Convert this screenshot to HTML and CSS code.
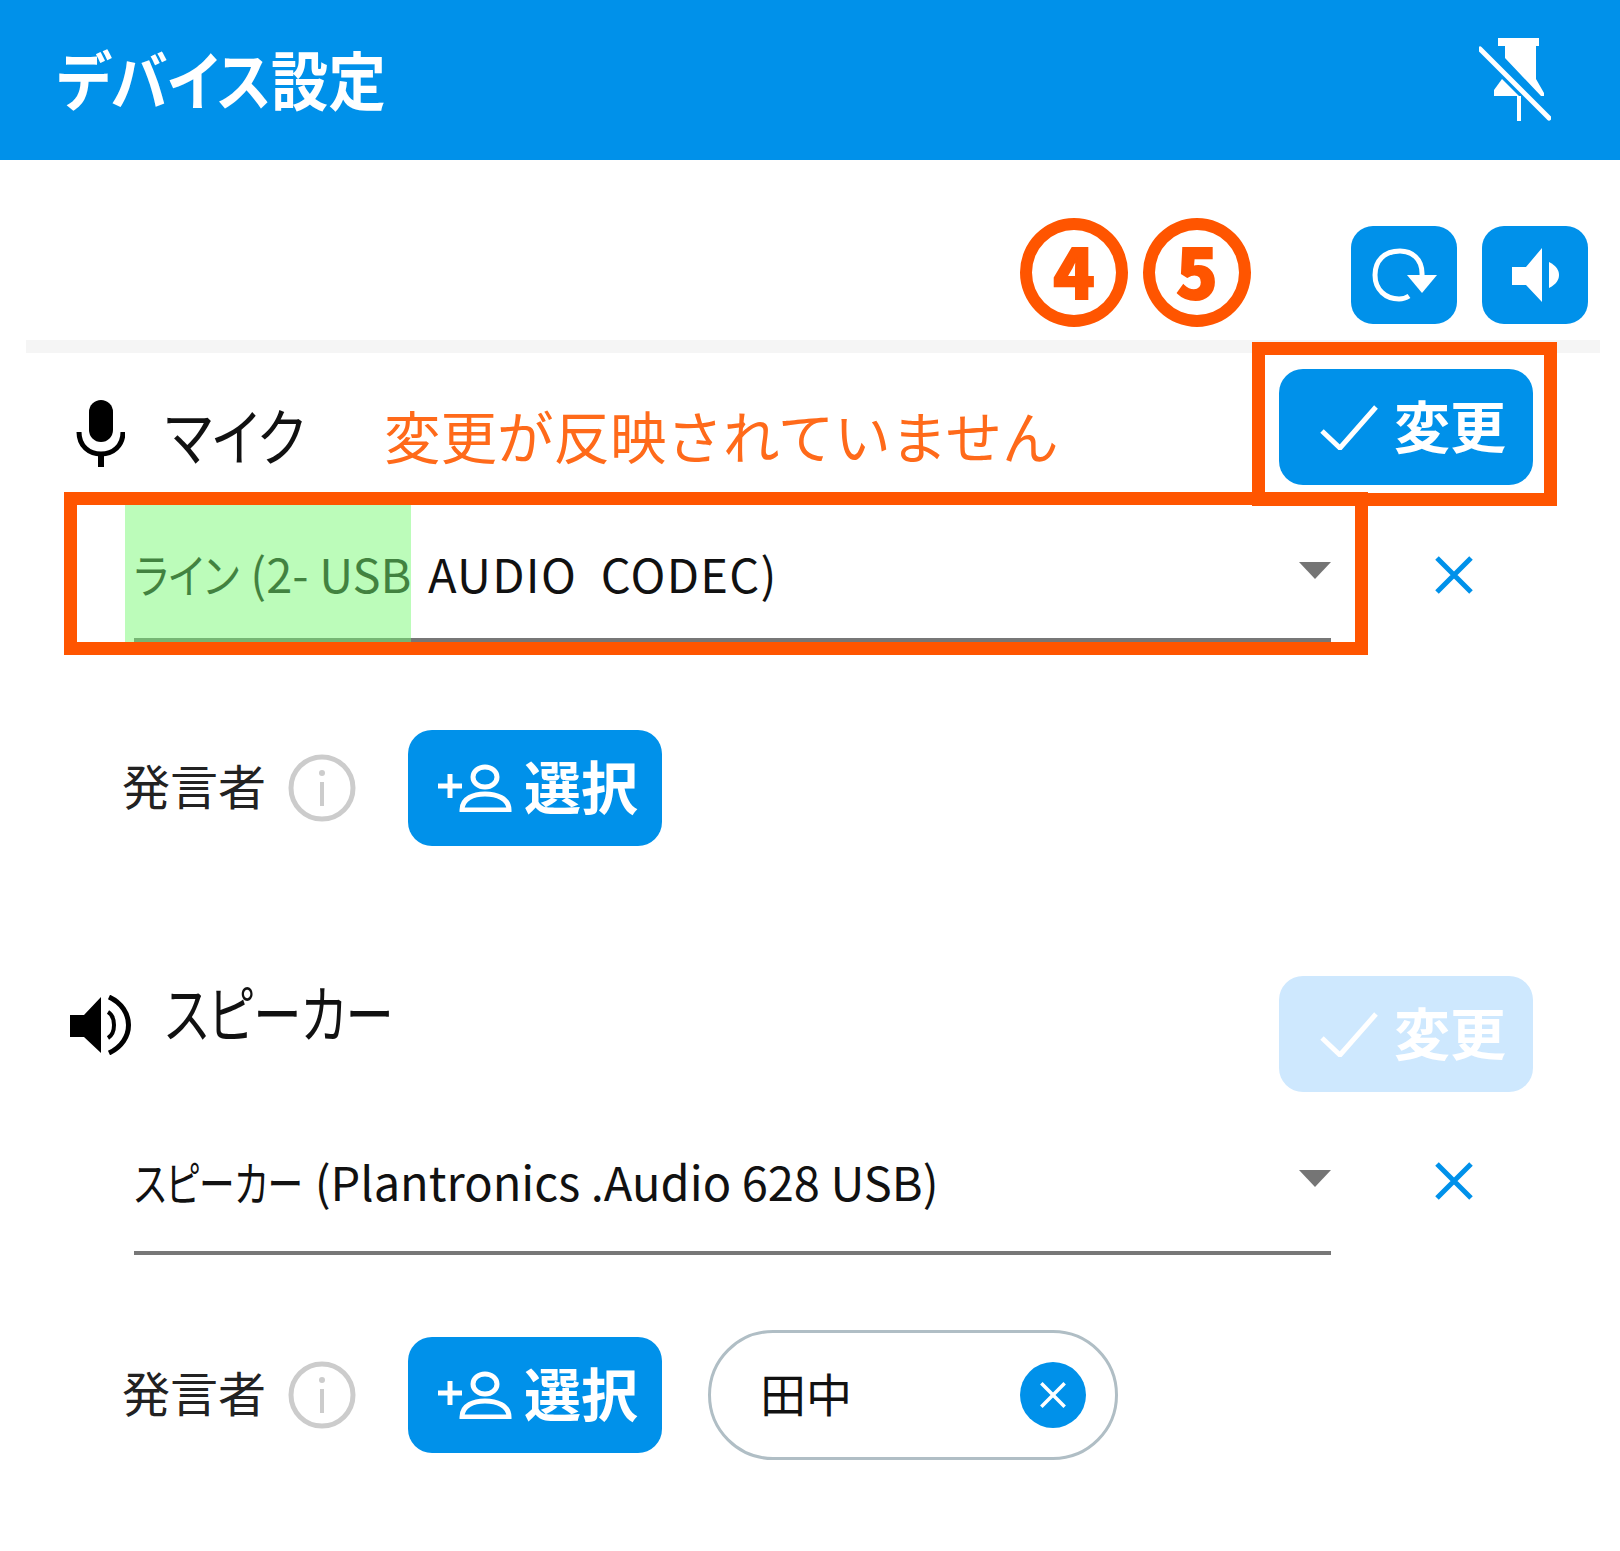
FILE: index.html
```html
<!DOCTYPE html>
<html lang="ja">
<head>
    <meta charset="UTF-8">
    <title>デバイス設定</title>
    <link rel="stylesheet" href="styles.css">
</head>
<body>
<div class="panel">

    <header class="title-bar">
        <h1>デバイス設定</h1>
        <svg class="pin-icon" viewBox="0 0 72 83" fill="#fff">
            <rect x="19" y="0" width="41" height="8"/>
            <path d="M26 8H57V41L65 55V58H62L26 20Z"/>
            <path d="M23 41L15 52V58H40Z"/>
            <rect x="38" y="58" width="4" height="25"/>
            <path d="M1 11L70 80" stroke="#fff" stroke-width="5" stroke-linecap="round"/>
        </svg>
    </header>

    <div class="toolbar">
        <button class="icon-button">
            <svg width="65" height="54" viewBox="0 0 65 54" fill="none" stroke="#fff" stroke-width="5">
                <path d="M50 28C51 10 39 3 28 3C12 3 3 13 3 27C3 42 14 51 27 51C31 51 34 50 37 48"/>
                <path d="M35 27H65L50 45Z" fill="#fff" stroke="none"/>
            </svg>
        </button>
        <button class="icon-button">
            <svg width="47" height="54" viewBox="0 0 47 54" fill="#fff">
                <path d="M0 19H14L30 0V54L14 37H0Z"/>
                <path d="M37 14C45 18 47 23 47 27C47 31 45 36 37 40Z"/>
            </svg>
        </button>
    </div>
    <div class="divider"></div>

    <!-- マイク -->
    <section>
        <div class="device-head device-head--mic">
            <svg class="mic-icon" viewBox="0 0 49 67">
                <rect x="13" y="0" width="24" height="42" rx="12"/>
                <path d="M3 32C3 46 13 54 25 54S47 46 47 32" fill="none" stroke="#000" stroke-width="5"/>
                <rect x="22" y="54" width="6" height="13"/>
            </svg>
            <span class="device-title"><span class="device-title-text">マイク</span></span>
            <span class="warning">変更が反映されていません</span>
            <button class="apply-button">
                <svg class="check-icon" viewBox="0 0 58 45"><path d="M2 26L20 43L56 2"/></svg>
                <span class="button-text">変更</span>
            </button>
        </div>
        <div class="select-row">
            <div class="select-field select-field--mic">
                <span class="select-text"><span class="kana kana--line">ライン</span> (2- USB <span class="codec">AUDIO&nbsp; CODEC)</span></span>
                <i class="select-arrow"></i>
            </div>
            <svg class="clear-icon" viewBox="0 0 38 38"><path d="M2 2L36 36M36 2L2 36"/></svg>
        </div>
        <div class="speaker-row speaker-row--mic">
            <span class="speaker-label">発言者</span>
            <svg class="info-icon" viewBox="0 0 68 68">
                <circle cx="34" cy="34" r="31" fill="none" stroke="#ccc" stroke-width="5"/>
                <circle cx="34" cy="19" r="3" fill="#ccc"/>
                <rect x="32" y="28" width="4" height="24" fill="#ccc"/>
            </svg>
            <button class="select-button">
                <svg class="person-icon" viewBox="0 0 76 48" fill="none" stroke="#fff" stroke-width="5">
                    <path d="M0 22H24M12 10V34"/>
                    <ellipse cx="47" cy="13" rx="12" ry="10"/>
                    <path d="M24 46C24 34 36 30 47 30S71 34 71 46Z"/>
                </svg>
                <span class="button-text">選択</span>
            </button>
        </div>
    </section>

    <!-- スピーカー -->
    <section>
        <div class="device-head device-head--speaker">
            <svg class="speaker-icon" viewBox="0 0 62 60">
                <path d="M0 20H14L31 2V58L14 42H0Z"/>
                <path d="M38 17C46 22 46 38 38 43" fill="none" stroke="#000" stroke-width="4"/>
                <path d="M39 2C65 14 65 46 39 58" fill="none" stroke="#000" stroke-width="5"/>
            </svg>
            <span class="device-title"><span class="device-title-text">スピーカー</span></span>
            <button class="apply-button apply-button--disabled">
                <svg class="check-icon" viewBox="0 0 58 45"><path d="M2 26L20 43L56 2"/></svg>
                <span class="button-text">変更</span>
            </button>
        </div>
        <div class="select-row select-row--speaker">
            <div class="select-field">
                <span class="select-text"><span class="kana kana--speaker">スピーカー</span> (Plantronics .Audio 628 USB)</span>
                <i class="select-arrow"></i>
            </div>
            <svg class="clear-icon" viewBox="0 0 38 38"><path d="M2 2L36 36M36 2L2 36"/></svg>
        </div>
        <div class="speaker-row speaker-row--speaker">
            <span class="speaker-label">発言者</span>
            <svg class="info-icon" viewBox="0 0 68 68">
                <circle cx="34" cy="34" r="31" fill="none" stroke="#ccc" stroke-width="5"/>
                <circle cx="34" cy="19" r="3" fill="#ccc"/>
                <rect x="32" y="28" width="4" height="24" fill="#ccc"/>
            </svg>
            <button class="select-button">
                <svg class="person-icon" viewBox="0 0 76 48" fill="none" stroke="#fff" stroke-width="5">
                    <path d="M0 22H24M12 10V34"/>
                    <ellipse cx="47" cy="13" rx="12" ry="10"/>
                    <path d="M24 46C24 34 36 30 47 30S71 34 71 46Z"/>
                </svg>
                <span class="button-text">選択</span>
            </button>
            <div class="chip">
                <span class="chip-text">田中</span>
                <span class="chip-close">
                    <svg viewBox="0 0 24 24"><path d="M2 2L22 22M22 2L2 22"/></svg>
                </span>
            </div>
        </div>
    </section>

    <!-- 注釈 -->
    <div class="note-number note-number--four">4</div>
    <div class="note-number note-number--five">5</div>
    <div class="note-box note-box--apply"></div>
    <div class="note-box note-box--select"></div>
    <div class="highlight"></div>
</div>
</body>
</html>
```

FILE: styles.css
```css
* {
    box-sizing: border-box;
}
body {
    margin: 0;
    background-color: #fff;
    color: #111;
    font-family: "Noto Sans CJK JP", sans-serif;
    font-feature-settings: "palt";
}
button {
    border: none;
    padding: 0;
    font-family: inherit;
    font-feature-settings: inherit;
}
.panel {
    position: relative;
    width: 1620px;
    height: 1551px;
    overflow: hidden;
}

/* タイトルバー */
.title-bar {
    display: flex;
    justify-content: space-between;
    align-items: center;
    height: 160px;
    padding: 0 69px 0 57px;
    background-color: #0091ea;
}
.title-bar h1 {
    margin: -6px 0 0;
    color: #fff;
    font-size: 64px;
    font-weight: 700;
    transform: scaleX(0.895);
    transform-origin: left center;
}
.pin-icon {
    width: 72px;
    height: 83px;
    margin-top: -2px;
}

/* ツールバー */
.toolbar {
    display: flex;
    justify-content: flex-end;
    gap: 25px;
    height: 180px;
    padding: 66px 32px 0 0;
}
.icon-button {
    display: flex;
    justify-content: center;
    align-items: center;
    width: 106px;
    height: 98px;
    background-color: #0091ea;
    border-radius: 22px;
}
.divider {
    height: 13px;
    margin: 0 20px 0 26px;
    background-color: #f5f5f5;
}

/* 見出し行 */
.device-head {
    display: flex;
    align-items: flex-start;
    padding-right: 87px;
}
.device-head--mic {
    height: 152px;
    padding-top: 16px;
    padding-left: 76px;
}
.device-head--speaker {
    margin-top: 130px;
    padding-left: 70px;
}
.mic-icon {
    width: 49px;
    height: 67px;
    margin: 31px 40px 0 0;
}
.speaker-icon {
    width: 62px;
    height: 60px;
    margin: 19px 33px 0 0;
}
.device-title {
    font-size: 62px;
    line-height: 70px;
    white-space: nowrap;
}
.device-title-text {
    display: inline-block;
    transform-origin: left center;
}
.device-head--mic .device-title {
    width: 219px;
    margin-top: 30px;
}
.device-head--mic .device-title-text {
    transform: scaleX(0.85);
}
.device-head--speaker .device-title {
    margin-top: 0;
}
.device-head--speaker .device-title-text {
    transform: scaleX(0.78);
}
.warning {
    margin-top: 30px;
    color: #ff6a1a;
    font-size: 56.5px;
    line-height: 70px;
    font-feature-settings: normal;
}
.apply-button {
    display: flex;
    align-items: center;
    gap: 16px;
    width: 254px;
    height: 116px;
    margin-left: auto;
    padding-left: 41px;
    background-color: #0091ea;
    border-radius: 24px;
    color: #fff;
    font-size: 56px;
    font-weight: 700;
}
.apply-button--disabled {
    background-color: #cee8fe;
}
.button-text {
    margin-top: -8px;
}
.check-icon {
    width: 58px;
    height: 45px;
    fill: none;
    stroke: #fff;
    stroke-width: 5;
}

/* セレクト */
.select-row {
    display: flex;
    align-items: flex-start;
    padding-left: 134px;
}
.select-row--speaker {
    margin-top: 21px;
}
.select-field {
    display: flex;
    justify-content: space-between;
    align-items: center;
    width: 1197px;
    padding-top: 38px;
    padding-bottom: 40px;
    border-bottom: 4px solid #777;
}
.select-field--mic {
    padding-bottom: 35px;
}
.select-text {
    font-size: 47px;
    line-height: 60px;
}
.codec {
    margin-left: 6px;
    letter-spacing: 1.3px;
}
.kana {
    display: inline-block;
    transform-origin: left center;
}
.kana--line {
    margin-right: -18px;
    transform: scaleX(0.85);
}
.kana--speaker {
    margin-right: -52px;
    transform: scaleX(0.76);
}
.select-arrow {
    width: 0;
    height: 0;
    margin-top: -6px;
    border-top: 17px solid #757575;
    border-left: 16px solid transparent;
    border-right: 16px solid transparent;
}
.clear-icon {
    width: 38px;
    height: 38px;
    margin: 51px 0 0 104px;
    fill: none;
    stroke: #0091ea;
    stroke-width: 5;
}
.select-row--speaker .clear-icon {
    margin-top: 49px;
}

/* 発言者 */
.speaker-row {
    display: flex;
    align-items: center;
    padding-left: 122px;
}
.speaker-row--mic {
    margin-top: 88px;
}
.speaker-row--speaker {
    margin-top: 75px;
}
.speaker-label {
    margin-top: -8px;
    color: #222;
    font-size: 48px;
}
.info-icon {
    width: 68px;
    height: 68px;
    margin-left: 22px;
}
.select-button {
    display: flex;
    align-items: center;
    gap: 10px;
    width: 254px;
    height: 116px;
    margin-left: 52px;
    padding-left: 30px;
    background-color: #0091ea;
    border-radius: 24px;
    color: #fff;
    font-size: 57px;
    font-weight: 700;
}
.person-icon {
    width: 76px;
    height: 48px;
}
.chip {
    display: flex;
    justify-content: space-between;
    align-items: center;
    width: 410px;
    height: 130px;
    margin-left: 46px;
    padding: 0 29px 0 49px;
    border: 3px solid #b0bec5;
    border-radius: 65px;
    font-size: 46px;
}
.chip-text {
    margin-top: -6px;
}
.chip-close {
    display: flex;
    justify-content: center;
    align-items: center;
    width: 66px;
    height: 66px;
    background-color: #0091ea;
    border-radius: 50%;
}
.chip-close svg {
    width: 28px;
    height: 28px;
    fill: none;
    stroke: #fff;
    stroke-width: 3;
}

/* 注釈 */
.note-number {
    position: absolute;
    top: 218px;
    display: flex;
    justify-content: center;
    align-items: center;
    width: 108px;
    height: 109px;
    padding-bottom: 6px;
    border: 12px solid #ff5500;
    border-radius: 50%;
    color: #ff5500;
    font-size: 68px;
    font-weight: 900;
    -webkit-text-stroke: 2px #ff5500;
}
.note-number--four {
    left: 1020px;
}
.note-number--five {
    left: 1143px;
}
.note-box {
    position: absolute;
    border: 13px solid #ff5500;
}
.note-box--apply {
    left: 1252px;
    top: 342px;
    width: 305px;
    height: 164px;
}
.note-box--select {
    left: 64px;
    top: 492px;
    width: 1304px;
    height: 163px;
}
.highlight {
    position: absolute;
    left: 125px;
    top: 505px;
    width: 286px;
    height: 137px;
    background-color: rgba(118, 249, 114, 0.49);
}
```
